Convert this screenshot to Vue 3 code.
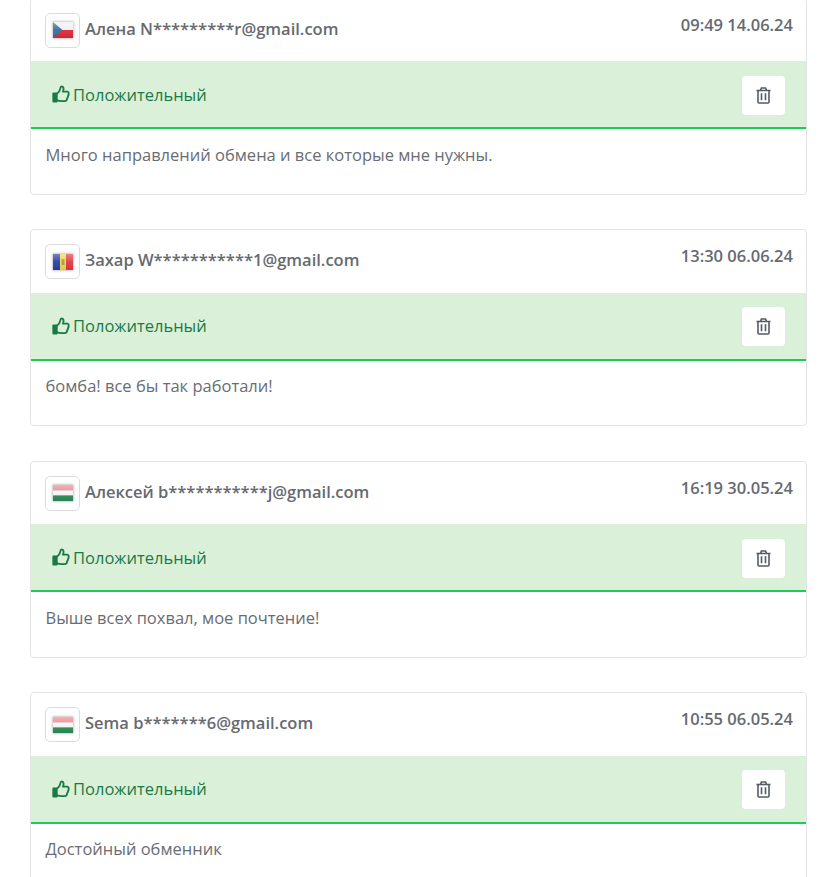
<script setup>
const cards = [
  { name: 'Алена N*********r@gmail.com', time: '09:49 14.06.24', text: 'Много направлений обмена и все которые мне нужны.', flag: 'cz' },
  { name: 'Захар W***********1@gmail.com', time: '13:30 06.06.24', text: 'бомба! все бы так работали!', flag: 'md' },
  { name: 'Алексей b***********j@gmail.com', time: '16:19 30.05.24', text: 'Выше всех похвал, мое почтение!', flag: 'hu' },
  { name: 'Sema b*******6@gmail.com', time: '10:55 06.05.24', text: 'Достойный обменник', flag: 'hu' },
]
</script>

<template>
  <div class="viewport">
    <div class="list">
      <article v-for="c in cards" :key="c.name" class="card">
        <header class="head">
          <div class="user">
            <span class="flag-box">
              <svg class="flag" width="26" height="22" viewBox="-2 -2 26 22">
                <defs>
                  <filter id="soft" x="-20%" y="-20%" width="140%" height="140%"><feGaussianBlur stdDeviation="0.6" /></filter>
                  <filter id="shade" x="-30%" y="-30%" width="160%" height="160%"><feGaussianBlur stdDeviation="1" /></filter>
                  <linearGradient id="gloss" x1="0" y1="0" x2="0" y2="1">
                    <stop offset="0" stop-color="#fff" stop-opacity="0.35" />
                    <stop offset="0.5" stop-color="#fff" stop-opacity="0.05" />
                    <stop offset="1" stop-color="#000" stop-opacity="0.08" />
                  </linearGradient>
                </defs>
                <rect x="0.5" y="0.5" width="21" height="17" fill="#777" opacity="0.55" filter="url(#shade)" />
                <g filter="url(#soft)">
                  <template v-if="c.flag === 'cz'">
                    <rect x="1" y="1" width="20" height="8" fill="#f0f0f3" />
                    <rect x="1" y="9" width="20" height="8" fill="#dd2b38" />
                    <path d="M1 1 L10.5 9 L1 17 Z" fill="#3a6d9e" />
                  </template>
                  <template v-else-if="c.flag === 'md'">
                    <rect x="1" y="1" width="7" height="16" fill="#2a3fa8" />
                    <rect x="8" y="1" width="6" height="16" fill="#f3d64a" />
                    <rect x="14" y="1" width="7" height="16" fill="#e23a40" />
                    <rect x="9.5" y="6" width="3" height="6" fill="#a39a5c" />
                  </template>
                  <template v-else>
                    <rect x="1" y="1" width="20" height="5.5" fill="#f0868c" />
                    <rect x="1" y="6.5" width="20" height="5" fill="#f5f5f5" />
                    <rect x="1" y="11.5" width="20" height="5.5" fill="#2f8a5a" />
                  </template>
                  <rect x="1" y="1" width="20" height="16" fill="url(#gloss)" />
                </g>
              </svg>
            </span>
            <span class="name">{{ c.name }}</span>
          </div>
          <time class="time">{{ c.time }}</time>
        </header>
        <div class="band">
          <div class="status">
            <svg class="thumb" width="18" height="18" viewBox="0 0 17 17" fill="none" stroke="#1a7a45" stroke-width="1.7" stroke-linejoin="round" stroke-linecap="round">
              <rect x="1.2" y="8" width="3.3" height="7.6" fill="#1a7a45" />
              <path d="M4.5 8.4 C6.4 7 7.6 5.4 7.9 3.2 C8 1.8 8.9 1.1 9.8 1.5 C11 2 11.2 3.9 10.3 6.3 H14.2 C15.5 6.3 16 7.4 15.6 8.4 C15.9 9.3 15.6 10 15 10.5 C15.2 11.4 14.9 12.1 14.2 12.6 C14.3 13.9 13.6 15.2 12 15.2 H8.6 C7 15.2 5.8 14.7 4.5 14.3" />
            </svg>
            <span>Положительный</span>
          </div>
          <button class="del" type="button" aria-label="Удалить">
            <svg width="15" height="17" viewBox="0 0 15 17" fill="none" stroke="#555b66" stroke-width="1.6">
              <path d="M0.5 3.5 H14.5" />
              <path d="M4.6 3.3 L5.4 1 H9.6 L10.4 3.3" />
              <path d="M2 3.5 V15 Q2 16 3 16 H12 Q13 16 13 15 V3.5" />
              <path d="M5.5 6.3 V13.3 M9.5 6.3 V13.3" />
            </svg>
          </button>
        </div>
        <p class="text">{{ c.text }}</p>
      </article>
    </div>
  </div>
</template>

<style scoped>
.viewport {
  width: 833px;
  height: 877px;
  overflow: hidden;
  background: #fff;
  font-family: "Open Sans", "Liberation Sans", sans-serif;
}
.list {
  display: flex;
  flex-direction: column;
  gap: 34.5px;
  padding: 0 26px 0 30px;
  margin-top: -2.3px;
}
.card {
  border: 1px solid #e2e4e6;
  border-radius: 4px;
  height: 197px;
  box-sizing: border-box;
  flex: none;
  overflow: hidden;
}
.head {
  height: 62.4px;
  display: flex;
  justify-content: space-between;
  padding: 14px 13px 0 14px;
  box-sizing: border-box;
}
.user {
  display: flex;
  align-items: flex-start;
  gap: 5px;
}
.flag-box {
  width: 35px;
  height: 35px;
  box-sizing: border-box;
  border: 1px solid #dcdcdc;
  border-radius: 5px;
  display: flex;
  align-items: center;
  justify-content: center;
}
.flag { display: block; }
.name {
  font-size: 16.5px;
  font-weight: 600;
  color: #666a70;
  line-height: 22px;
  padding-top: 5px;
}
.time {
  font-size: 16.5px;
  font-weight: 600;
  color: #666a70;
  line-height: 22px;
  margin-top: 1px;
}
.band {
  height: 68px;
  box-sizing: border-box;
  background: #daf0d9;
  border-bottom: 2px solid #1fcb52;
  display: flex;
  align-items: center;
  justify-content: space-between;
  padding: 1.6px 21px 0 21px;
}
.status {
  display: flex;
  align-items: center;
  gap: 3px;
  font-size: 16.5px;
  color: #1a7a45;
  margin-bottom: 1.5px;
}
.thumb { display: block; }
.del {
  width: 43px;
  height: 39px;
  padding: 0;
  margin-top: 0.5px;
  border: 0;
  border-radius: 4px;
  background: #fff;
  display: flex;
  align-items: center;
  justify-content: center;
}
.text {
  margin: 0;
  padding: 14.6px 14.5px 0;
  font-size: 16.5px;
  line-height: 22px;
  color: #696d73;
}
</style>
